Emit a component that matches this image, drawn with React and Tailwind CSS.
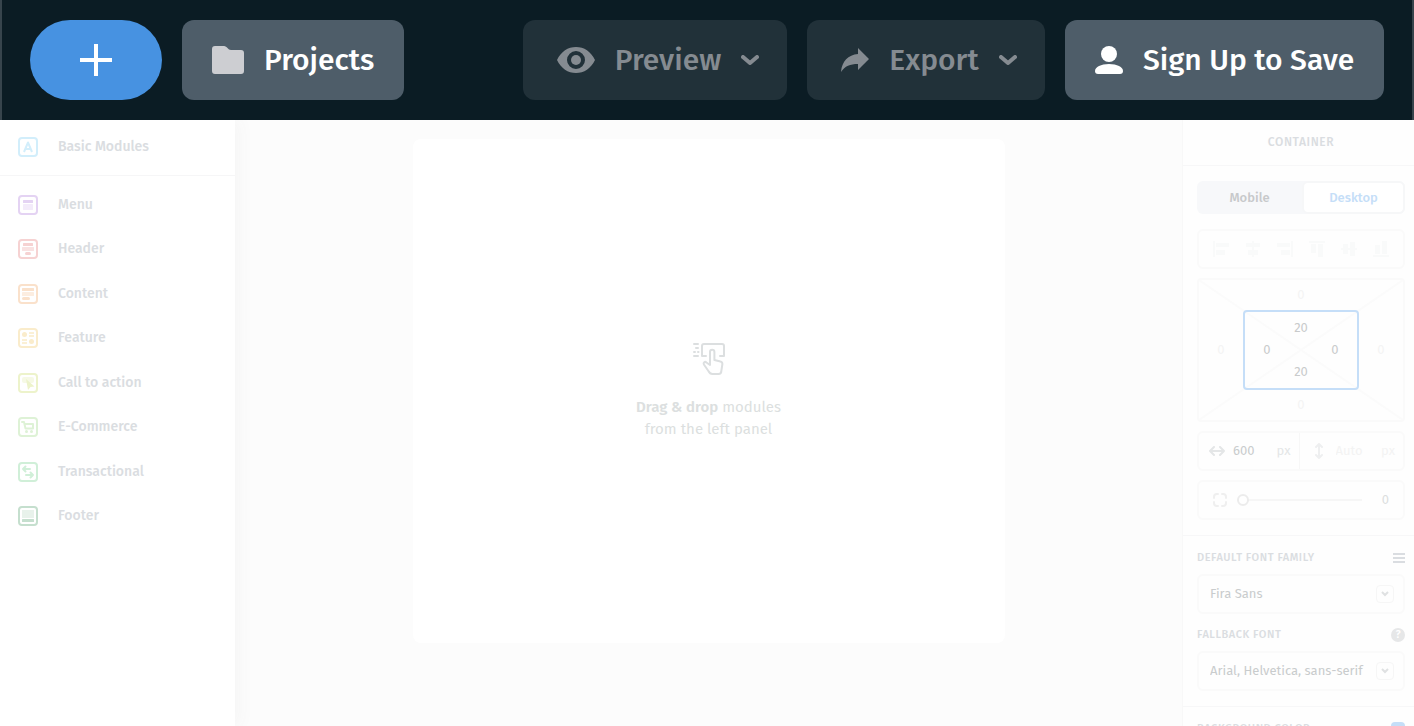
const modules = [
  { id: 'menu', title: 'Menu', color: 'text-[#e4d3f3]' },
  { id: 'header', title: 'Header', color: 'text-[#f6d2d2]' },
  { id: 'content', title: 'Content', color: 'text-[#fae1cb]' },
  { id: 'feature', title: 'Feature', color: 'text-[#faeccb]' },
  { id: 'cta', title: 'Call to action', color: 'text-[#edf3cb]' },
  { id: 'commerce', title: 'E-Commerce', color: 'text-[#def2d6]' },
  { id: 'transactional', title: 'Transactional', color: 'text-[#d0efd8]' },
  { id: 'footer', title: 'Footer', color: 'text-[#c5dfce]' }
];

const glyphs = {
  basic: <path d="M6 15 10 5.500 14 15M7.500 12h5" fill="none" stroke="currentColor" strokeWidth="2" strokeLinejoin="round" />,
  menu: (
    <>
      <rect x="5" y="5" width="10" height="3" rx=".5" />
      <rect x="5" y="9" width="10" height="6" rx=".5" opacity=".45" />
    </>
  ),
  header: (
    <>
      <rect x="5" y="4" width="10" height="3" rx=".5" />
      <rect x="4" y="8" width="12" height="4" rx=".5" opacity=".65" />
      <rect x="7" y="13" width="6" height="3" rx="1.5" />
    </>
  ),
  content: (
    <>
      <rect x="4" y="4" width="12" height="3" rx=".5" />
      <rect x="4" y="8" width="12" height="4" rx=".5" opacity=".6" />
      <rect x="4" y="13" width="8" height="3" rx="1.5" />
    </>
  ),
  feature: (
    <>
      <circle cx="6.5" cy="6.5" r="2.5" />
      <circle cx="13.5" cy="13.5" r="2.5" />
      <path d="M11 4h5v2h-5zM11 7h5v2h-5zM4 11h5v2H4zM4 14h5v2H4z" opacity=".8" />
    </>
  ),
  cta: (
    <>
      <rect x="4" y="4" width="12" height="6" rx="2" opacity=".5" />
      <path d="m8 6 8.500 7.500-4 .5-2.500 3z" />
    </>
  ),
  commerce: (
    <>
      <path d="M4 5h2l1.5 6.500H15V7H7" fill="none" stroke="currentColor" strokeWidth="2" strokeLinejoin="round" strokeLinecap="round" />
      <circle cx="8.500" cy="14.500" r="1.500" />
      <circle cx="13.500" cy="14.500" r="1.500" />
    </>
  ),
  transactional: (
    <path
      d="M12 7H5m2.500-2.500L5 7l2.500 2.500M8 13h7m-2.500-2.500L15 13l-2.500 2.500"
      fill="none"
      stroke="currentColor"
      strokeWidth="2"
      strokeLinejoin="round"
      strokeLinecap="round"
    />
  ),
  footer: (
    <>
      <rect x="4" y="4" width="12" height="8" opacity=".4" />
      <rect x="4" y="13" width="12" height="3" rx=".5" />
    </>
  )
};

const ModuleIcon = ({ id, color }) => (
  <svg viewBox="0 0 20 20" className={`w-5 h-5 shrink-0 ${color}`} fill="currentColor" aria-hidden="true">
    <rect x="1" y="1" width="18" height="18" rx="3" fill="none" stroke="currentColor" strokeWidth="2" />
    {glyphs[id]}
  </svg>
);

const Chevron = () => (
  <svg viewBox="0 0 18 10" className="w-[18px] h-[10px]" fill="none" stroke="currentColor" strokeWidth="4" strokeLinecap="round" strokeLinejoin="round" aria-hidden="true">
    <path d="m2 2 7 6 7-6" />
  </svg>
);

const TopBar = () => (
  <header className="relative z-20 flex h-[120px] shrink-0 items-center justify-between border-x-2 border-[#37444c] bg-[#0b1c24] px-7 text-[30px] font-medium text-white">
    <div className="flex gap-5">
      <button aria-label="New project" className="flex h-20 w-[132px] items-center justify-center rounded-full bg-[#4792e1]">
        <svg viewBox="0 0 32 32" className="w-8 h-8" aria-hidden="true">
          <path d="M16 0v32M0 16h32" stroke="currentColor" strokeWidth="4" />
        </svg>
      </button>
      <button className="flex h-20 w-[222px] items-center gap-5 rounded-xl bg-[#4e5d69] pl-[30px]">
        <svg viewBox="0 0 32 28" className="h-7 w-8 text-[#cdced2]" fill="currentColor" aria-hidden="true">
          <path d="M3 0h9c3 0 4 4 7 4h10a3 3 0 0 1 3 3v18a3 3 0 0 1-3 3H3a3 3 0 0 1-3-3V3a3 3 0 0 1 3-3z" />
        </svg>
        Projects
      </button>
    </div>
    <div className="flex gap-5">
      <button className="flex h-20 w-[264px] items-center justify-between rounded-xl bg-[#213139] pr-7 pl-[34px] text-[#858b91]">
        <svg viewBox="0 0 38 26" className="h-[26px] w-[38px]" fill="currentColor" aria-hidden="true">
          <path fillRule="evenodd" d="M19 0c8 0 15 4.500 19 13-4 8.500-11 13-19 13S4 21.500 0 13C4 4.500 11 0 19 0zm0 4a9 9 0 1 0 0 18 9 9 0 0 0 0-18z" />
          <circle cx="19" cy="13" r="5" />
        </svg>
        Preview
        <Chevron />
      </button>
      <button className="flex h-20 w-[238px] items-center justify-between rounded-xl bg-[#213139] pr-7 pl-[34px] text-[#858b91]">
        <svg viewBox="0 0 28 24" className="h-6 w-7" fill="currentColor" aria-hidden="true">
          <path d="M17 0 28 11 17 22v-6C9 16 4 18 0 24 1 13 7 7 17 6z" />
        </svg>
        Export
        <Chevron />
      </button>
      <button className="flex h-20 w-[319px] items-center gap-5 rounded-xl bg-[#4e5d69] pl-[30px]">
        <svg viewBox="0 0 28 28" className="w-7 h-7" fill="currentColor" aria-hidden="true">
          <circle cx="14" cy="8" r="8" />
          <path d="M14 18c8 0 14 3 14 7a3 3 0 0 1-3 3H3a3 3 0 0 1-3-3c0-4 6-7 14-7z" />
        </svg>
        Sign Up to Save
      </button>
    </div>
  </header>
);

const Sidebar = () => (
  <aside className="z-10 w-[235px] shrink-0 bg-white text-sm font-medium text-[#dadde1] shadow-[4px_0_16px_#f5f5f5]">
    <div className="border-b border-[#f6f6f7] px-[18px] pt-[17px] pb-[18px]">
      <button className="flex h-5 items-center gap-5">
        <ModuleIcon id="basic" color="text-[#d2eefb]" />
        Basic Modules
      </button>
    </div>
    <nav className="flex h-[367px] flex-col justify-between px-[18px] pt-[19px] pb-[17px]">
      {modules.map((module) => (
        <button key={module.id} className="flex h-5 items-center gap-5">
          <ModuleIcon id={module.id} color={module.color} />
          {module.title}
        </button>
      ))}
    </nav>
  </aside>
);

const Canvas = () => (
  <main className="flex min-w-0 flex-1 items-start justify-center bg-[#fcfcfc] px-5 pt-[19px]">
    <div className="flex h-[504px] w-full max-w-[592px] flex-col items-center justify-center rounded-lg bg-white text-center text-[15px] leading-[22px] text-[#dcdfe0]">
      <svg viewBox="0 0 32 32" className="mb-[21px] h-8 w-8" fill="none" stroke="currentColor" strokeWidth="2" strokeLinecap="round" strokeLinejoin="round" aria-hidden="true">
        <path d="M13 13H9V3a2 2 0 0 1 2-2h18a2 2 0 0 1 2 2v10h-4" />
        <path d="M17 22V9a2.200 2.200 0 0 1 4.400 0v8l6 1.500a2.500 2.500 0 0 1 2 2.500l-1 6.500c0 2-1 3.500-3 3.500h-6c-2 0-3-1-4-3l-4.500-6.500c-1-2 1-3.500 2.500-2z" />
        <path d="M1 1h4M3 5h2M1 9h1M5 9h.5M1 13h4" />
      </svg>
      <p><strong className="font-semibold">Drag &amp; drop</strong> modules<br />from the left panel</p>
    </div>
  </main>
);

const aligns = [
  { id: 'left', label: 'Align left', d: 'M0 0h2v16H0zM3 2h13v4H3zM3 9h9v5H3z' },
  { id: 'center', label: 'Align center', d: 'M7 0h2v16H7zM1 2h14v4H1zM3 9h10v5H3z' },
  { id: 'right', label: 'Align right', d: 'M14 0h2v16h-2zM0 2h13v4H0zM4 9h9v5H4z' },
  { id: 'top', label: 'Align top', d: 'M0 0h16v2H0zM2 3h5v9H2zM9 3h5v13H9z' },
  { id: 'middle', label: 'Align middle', d: 'M0 7h16v2H0zM2 3h5v10H2zM9 1h5v14H9z' },
  { id: 'bottom', label: 'Align bottom', d: 'M0 14h16v2H0zM2 4h5v9H2zM9 0h5v13H9z' }
];

const SpacingInput = ({ label, value, className }) => (
  <input aria-label={label} defaultValue={value} className={`w-6 justify-self-center self-center bg-transparent text-center ${className}`} />
);

const SpacingBox = () => (
  <div className="relative mt-[9px] grid h-36 grid-cols-[44px_1fr_44px] grid-rows-[30px_80px_30px] rounded border-2 border-[#fafafa] text-[13px] leading-4 text-[#f4f4f4]">
    <svg viewBox="0 0 100 100" preserveAspectRatio="none" className="absolute inset-0 h-full w-full" aria-hidden="true">
      <path d="M0 0l100 100M100 0 0 100" stroke="#fbfbfb" strokeWidth="2" vectorEffect="non-scaling-stroke" />
    </svg>
    <SpacingInput label="Margin top" value="0" className="col-start-2 row-start-1" />
    <SpacingInput label="Margin left" value="0" className="col-start-1 row-start-2" />
    <div className="z-10 col-start-2 row-start-2 grid grid-cols-3 grid-rows-3 rounded-sm border-2 border-[#c5def8] px-[5px] py-[5px] text-[#c9cbcc]">
      <SpacingInput label="Padding top" value="20" className="col-start-2 row-start-1" />
      <SpacingInput label="Padding left" value="0" className="col-start-1 row-start-2" />
      <SpacingInput label="Padding right" value="0" className="col-start-3 row-start-2" />
      <SpacingInput label="Padding bottom" value="20" className="col-start-2 row-start-3" />
    </div>
    <SpacingInput label="Margin right" value="0" className="col-start-3 row-start-2" />
    <SpacingInput label="Margin bottom" value="0" className="col-start-2 row-start-3" />
  </div>
);

const FontSelect = ({ id, value }) => (
  <div className="relative">
    <select id={id} className="h-10 w-full appearance-none rounded-md border-2 border-[#fafafa] bg-transparent pl-[11px] text-[13px] font-normal tracking-normal text-[#c9cccd]">
      <option>{value}</option>
    </select>
    <span className="pointer-events-none absolute top-[11px] right-[11px] flex h-[18px] w-[18px] items-center justify-center rounded-sm border border-[#f6f6f6] text-[#dfe1e2]">
      <svg viewBox="0 0 8 6" className="h-[6px] w-2" fill="none" stroke="currentColor" strokeWidth="2" aria-hidden="true">
        <path d="m1 1 3 3 3-3" />
      </svg>
    </span>
  </div>
);

const SettingsPanel = () => (
  <aside className="w-[232px] shrink-0 overflow-hidden border-l border-[#f8f8f8] bg-[#fefefe]">
    <h2 className="border-b border-[#f7f7f8] pr-[9px] pl-[14px] text-center text-xs leading-[45px] font-medium tracking-wider text-[#dadde1]">CONTAINER</h2>

    <section className="border-b border-[#f7f7f8] pt-[15px] pr-[9px] pb-[15px] pl-[14px]">
      <div className="flex h-[33px] rounded-md bg-[#f7f8fa] text-[13px] font-medium">
        <button className="flex-1 text-[#c7c9cb]">Mobile</button>
        <button className="w-[103px] rounded-md border-2 border-[#f6f7f8] bg-white text-[#c5def8]">Desktop</button>
      </div>

      <div className="mt-[15px] flex h-10 items-center justify-between rounded-md border-2 border-[#fafafa] px-[14px]">
        {aligns.map((align) => (
          <button key={align.id} aria-label={align.label}>
            <svg viewBox="0 0 16 16" className="h-4 w-4 text-[#f9fafa]" fill="currentColor" aria-hidden="true">
              <path d={align.d} />
            </svg>
          </button>
        ))}
      </div>

      <SpacingBox />

      <div className="mt-[9px] flex h-10 rounded-md border-2 border-[#fafafa] text-[13px] text-[#e4e6e7]">
        <label className="flex flex-1 items-center border-r border-[#f7f7f7] pr-2 pl-[10px]">
          <svg viewBox="0 0 16 10" className="mr-2 h-[10px] w-4 shrink-0" fill="none" stroke="currentColor" strokeWidth="2" strokeLinecap="round" strokeLinejoin="round" aria-hidden="true">
            <path d="M1 5h14M5 1 1 5l4 4M11 1l4 4-4 4" />
          </svg>
          <input aria-label="Width" defaultValue="600" className="w-0 min-w-0 flex-1 bg-transparent text-[#c9cccd]" />
          px
        </label>
        <label className="flex flex-1 items-center pr-2 pl-[14px] text-[#f3f3f3]">
          <svg viewBox="0 0 10 16" className="mr-3 h-4 w-[10px] shrink-0 text-[#eeeff0]" fill="none" stroke="currentColor" strokeWidth="2" strokeLinecap="round" strokeLinejoin="round" aria-hidden="true">
            <path d="M5 1v14M2 4l3-3 3 3M2 12l3 3 3-3" />
          </svg>
          <input aria-label="Height" defaultValue="Auto" className="w-0 min-w-0 flex-1 bg-transparent" />
          px
        </label>
      </div>

      <div className="mt-[9px] flex h-10 items-center rounded-md border-2 border-[#fafafa] pr-[14px] pl-[14px] text-[13px] text-[#dcdedf]">
        <svg viewBox="0 0 14 14" className="h-[14px] w-[14px] shrink-0 text-[#efefef]" fill="none" stroke="currentColor" strokeWidth="2" strokeLinecap="round" aria-hidden="true">
          <path d="M1 5V4a3 3 0 0 1 3-3h1M9 1h1a3 3 0 0 1 3 3v1M13 9v1a3 3 0 0 1-3 3H9M5 13H4a3 3 0 0 1-3-3V9" />
        </svg>
        <input
          type="range"
          aria-label="Border radius"
          defaultValue="0"
          className="mr-5 ml-[10px] h-3 w-0 min-w-0 flex-1 appearance-none bg-transparent [&::-webkit-slider-runnable-track]:h-[2px] [&::-webkit-slider-runnable-track]:bg-[#f6f6f6] [&::-webkit-slider-thumb]:-mt-[5px] [&::-webkit-slider-thumb]:h-3 [&::-webkit-slider-thumb]:w-3 [&::-webkit-slider-thumb]:appearance-none [&::-webkit-slider-thumb]:rounded-full [&::-webkit-slider-thumb]:border-2 [&::-webkit-slider-thumb]:border-[#ececec] [&::-webkit-slider-thumb]:bg-white"
        />
        0
      </div>
    </section>

    <section className="border-b border-[#f7f7f8] pt-[14px] pr-[9px] pb-[15px] pl-[14px] text-[11px] leading-4 font-medium tracking-wider text-[#dadde1]">
      <div className="mb-2 flex items-center justify-between">
        <label htmlFor="font-family">DEFAULT FONT FAMILY</label>
        <button aria-label="Font list">
          <svg viewBox="0 0 12 10" className="h-[10px] w-3" fill="currentColor" aria-hidden="true">
            <path d="M0 0h12v2H0zM0 4h12v2H0zM0 8h12v2H0z" />
          </svg>
        </button>
      </div>
      <FontSelect id="font-family" value="Fira Sans" />
      <div className="mt-[13px] mb-2 flex items-center justify-between">
        <label htmlFor="fallback-font">FALLBACK FONT</label>
        <button aria-label="Help" className="h-[14px] w-[14px] rounded-full bg-[#e6e7e8] leading-[14px] tracking-normal text-white">?</button>
      </div>
      <FontSelect id="fallback-font" value="Arial, Helvetica, sans-serif" />
    </section>

    <section className="flex items-center justify-between pt-[14px] pr-[9px] pl-[14px] text-[11px] leading-4 font-medium tracking-wider text-[#dadde1]">
      <label htmlFor="background-color">BACKGROUND COLOR</label>
      <input id="background-color" type="checkbox" defaultChecked className="h-[14px] w-[14px] appearance-none rounded bg-[#c5def8]" />
    </section>
  </aside>
);

const App = () => (
  <div className="flex h-screen flex-col overflow-hidden bg-white font-['Fira_Sans','Noto_Sans',sans-serif]">
    <TopBar />
    <div className="flex min-h-0 flex-1">
      <Sidebar />
      <Canvas />
      <SettingsPanel />
    </div>
  </div>
);

export default App;
